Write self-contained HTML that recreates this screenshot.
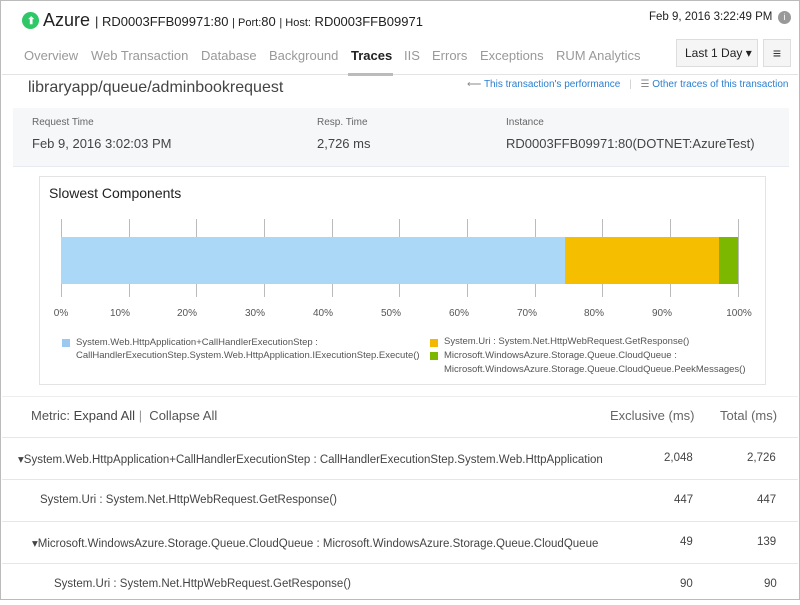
<!DOCTYPE html>
<html><head><style>
*{margin:0;padding:0;box-sizing:border-box}
body{width:800px;height:600px;overflow:hidden;background:#fff;font-family:"Liberation Sans",sans-serif;color:#333;position:relative;border:1px solid #bbb}
.a{position:absolute;white-space:nowrap}
.tab{font-size:13px;color:#999;top:47px}
.grid{position:absolute;top:218px;width:1px;height:78px;background:#bbb}
.pl{position:absolute;top:307px;font-size:10px;color:#555;width:40px;text-align:center}
.row{position:absolute;left:1px;right:1px;height:42px;border-top:1px solid #e6e6e6;font-size:11.5px;color:#444}
.row span{position:absolute;top:14px}
</style></head><body>
<div class="a" style="left:21px;top:11px;width:17px;height:17px;border-radius:50%;background:#2ec866"></div>
<div class="a" style="left:26px;top:15px;color:#fff;font-size:10px;font-weight:bold">⬆</div>
<div class="a" style="left:42px;top:9px;font-size:18px;color:#222">Azure <span style="font-size:13px;color:#222">| RD0003FFB09971:80 <span style="font-size:11px">| Port:</span>80 <span style="font-size:11px">| Host:</span> RD0003FFB09971</span></div>
<div class="a" style="left:648px;top:10px;font-size:11.5px;color:#222">Feb 9, 2016 3:22:49 PM</div>
<div class="a" style="left:777px;top:10px;width:13px;height:13px;border-radius:50%;background:#999;color:#fff;font-size:9px;text-align:center;line-height:13px">i</div>
<div class="a tab" style="left:23px">Overview</div>
<div class="a tab" style="left:90px">Web Transaction</div>
<div class="a tab" style="left:200px">Database</div>
<div class="a tab" style="left:268px">Background</div>
<div class="a tab" style="left:350px;color:#222;font-weight:bold">Traces</div>
<div class="a tab" style="left:403px">IIS</div>
<div class="a tab" style="left:431px">Errors</div>
<div class="a tab" style="left:479px">Exceptions</div>
<div class="a tab" style="left:555px">RUM Analytics</div>
<div class="a" style="left:1px;right:1px;top:73px;height:1px;background:#e3e3e3"></div>
<div class="a" style="left:347px;top:72px;width:45px;height:3px;background:#bbb"></div>
<div class="a" style="left:675px;top:38px;width:82px;height:28px;border:1px solid #ddd;background:#f5f5f5;font-size:12px;color:#222;padding:6px 0 0 8px">Last 1 Day ▾</div>
<div class="a" style="left:762px;top:38px;width:28px;height:28px;border:1px solid #ddd;background:#f5f5f5;font-size:14px;text-align:center;line-height:26px">≡</div>
<div class="a" style="left:27px;top:78px;font-size:16px;color:#444">libraryapp/queue/adminbookrequest</div>
<div class="a" style="left:466px;top:78px;font-size:10px;color:#2b7fd0"><span style="color:#888">⟵</span> This transaction's performance <span style="color:#ccc;margin:0 6px">|</span> <span style="color:#888">☰</span> Other traces of this transaction</div>
<div class="a" style="left:12px;top:107px;width:776px;height:59px;background:#f6f7f9;border-bottom:1px solid #e6ebf2"></div>
<div class="a" style="left:31px;top:116px;font-size:10px;color:#666">Request Time</div>
<div class="a" style="left:31px;top:135px;font-size:13px;color:#444">Feb 9, 2016 3:02:03 PM</div>
<div class="a" style="left:316px;top:116px;font-size:10px;color:#666">Resp. Time</div>
<div class="a" style="left:316px;top:135px;font-size:13px;color:#444">2,726 ms</div>
<div class="a" style="left:505px;top:116px;font-size:10px;color:#666">Instance</div>
<div class="a" style="left:505px;top:135px;font-size:13px;color:#444">RD0003FFB09971:80(DOTNET:AzureTest)</div>
<div class="a" style="left:38px;top:175px;width:727px;height:209px;border:1px solid #e3e3e3"></div>
<div class="a" style="left:48px;top:184px;font-size:14px;color:#222">Slowest Components</div>
<div class="grid" style="left:60px"></div><div class="grid" style="left:128px"></div><div class="grid" style="left:195px"></div><div class="grid" style="left:263px"></div><div class="grid" style="left:331px"></div><div class="grid" style="left:398px"></div><div class="grid" style="left:466px"></div><div class="grid" style="left:534px"></div><div class="grid" style="left:601px"></div><div class="grid" style="left:669px"></div><div class="grid" style="left:737px"></div>
<div class="a" style="left:60px;top:236px;width:504px;height:47px;background:#acd8f8"></div>
<div class="a" style="left:564px;top:236px;width:154px;height:47px;background:#f5bf00"></div>
<div class="a" style="left:718px;top:236px;width:19px;height:47px;background:#7db800"></div>
<div class="pl" style="left:40px">0%</div><div class="pl" style="left:99px">10%</div><div class="pl" style="left:166px">20%</div><div class="pl" style="left:234px">30%</div><div class="pl" style="left:302px">40%</div><div class="pl" style="left:370px">50%</div><div class="pl" style="left:438px">60%</div><div class="pl" style="left:506px">70%</div><div class="pl" style="left:573px">80%</div><div class="pl" style="left:641px">90%</div><div class="pl" style="left:718px">100%</div>
<div class="a" style="left:61px;top:338px;width:8px;height:8px;background:#9cc9ef"></div>
<div class="a" style="left:75px;top:335px;font-size:9.5px;color:#555;line-height:13px">System.Web.HttpApplication+CallHandlerExecutionStep :<br>CallHandlerExecutionStep.System.Web.HttpApplication.IExecutionStep.Execute()</div>
<div class="a" style="left:429px;top:338px;width:8px;height:8px;background:#f5b800"></div>
<div class="a" style="left:443px;top:335px;font-size:9.5px;color:#555">System.Uri : System.Net.HttpWebRequest.GetResponse()</div>
<div class="a" style="left:429px;top:351px;width:8px;height:8px;background:#7db800"></div>
<div class="a" style="left:443px;top:348px;font-size:9.5px;color:#555;line-height:14px">Microsoft.WindowsAzure.Storage.Queue.CloudQueue :<br>Microsoft.WindowsAzure.Storage.Queue.CloudQueue.PeekMessages()</div>
<div class="a" style="left:1px;right:1px;top:395px;height:1px;background:#eee"></div>
<div class="a" style="left:30px;top:407px;font-size:13px;color:#555">Metric: <span style="color:#444">Expand All</span> <span style="color:#999">|</span>&nbsp; Collapse All</div>
<div class="a" style="left:609px;top:407px;font-size:13px;color:#666">Exclusive (ms)</div>
<div class="a" style="left:719px;top:407px;font-size:13px;color:#666">Total (ms)</div>
<div class="row" style="top:436px"><span style="left:16px">▾System.Web.HttpApplication+CallHandlerExecutionStep : CallHandlerExecutionStep.System.Web.HttpApplication</span><span style="left:662px">2,048</span><span style="left:745px">2,726</span></div>
<div class="row" style="top:478px"><span style="left:38px">System.Uri : System.Net.HttpWebRequest.GetResponse()</span><span style="left:672px">447</span><span style="left:755px">447</span></div>
<div class="row" style="top:520px"><span style="left:30px">▾Microsoft.WindowsAzure.Storage.Queue.CloudQueue : Microsoft.WindowsAzure.Storage.Queue.CloudQueue</span><span style="left:678px">49</span><span style="left:755px">139</span></div>
<div class="row" style="top:562px"><span style="left:52px">System.Uri : System.Net.HttpWebRequest.GetResponse()</span><span style="left:678px">90</span><span style="left:762px">90</span></div>
</body></html>
